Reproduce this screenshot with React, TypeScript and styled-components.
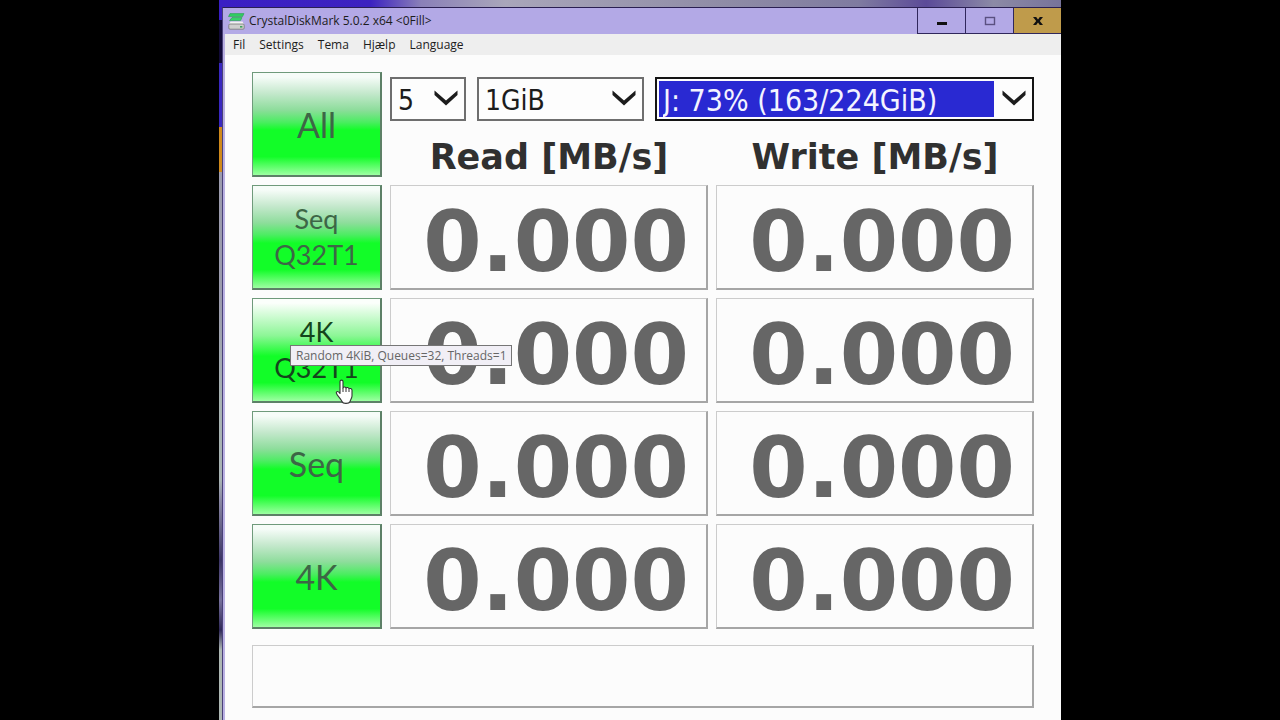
import React from "react";
import styled, { createGlobalStyle, css } from "styled-components";

const GlobalStyle = createGlobalStyle`
  *, *::before, *::after { box-sizing: border-box; }
  body { margin: 0; background: #000; }
  button, select { margin: 0; font: inherit; color: inherit; }
`;

const uiFont = `"Segoe UI", "Open Sans", "Noto Sans", sans-serif`;
const valueFont = `Verdana, "DejaVu Sans", sans-serif`;
const comboFont = `Tahoma, "DejaVu Sans Condensed", "DejaVu Sans", sans-serif`;
const buttonFont = `"Comic Sans MS", Lato, sans-serif`;

const Desktop = styled.div`
  width: 100%;
  max-width: 842px;
  min-height: 100vh;
  margin: 0 auto;
  padding: 7px 0 0 3px;
  display: flex;
  background:
    linear-gradient(90deg, #3a1fc4 0%, #3c22c0 18%, #8a80b8 24%, #a9a6ba 34%, #8f8ca6 60%, #7f7ba0 76%, #5b4a98 84%, #8c8aa6 92%, #77739a 100%)
      0 0 / 100% 7px no-repeat,
    linear-gradient(180deg, #3a1fc4 0 20px, #120a38 20px 63px, #3a28c0 63px 127px, #d08a1c 127px 172px, #9c9cae 172px 300px, #a9b4b4 400px 480px, #8a88a4 500px, #3c3566 560px, #77719c 600px, #2f2858 630px, #aeb8b4 650px 100%);
`;

const Window = styled.main`
  flex: 1;
  min-width: 0;
  display: flex;
  flex-direction: column;
  border-top: 1px solid #2a1f52;
  border-left: 1px solid #4a4178;
  background: #fcfcfc;
  font-family: ${uiFont};
  color: #1c1c1c;
`;

const TitleBar = styled.header`
  display: flex;
  align-items: stretch;
  height: 26px;
  padding-left: 5px;
  background: #b3a9e6;
  font-size: 12px;
`;

const Title = styled.h1`
  flex: 1;
  margin: 0;
  display: flex;
  align-items: center;
  gap: 4px;
  font-size: 12px;
  line-height: 26px;
  font-weight: 400;
  white-space: nowrap;
`;

const CaptionButton = styled.button<{ $close?: boolean }>`
  width: 48px;
  padding: 0;
  display: flex;
  align-items: center;
  justify-content: center;
  border: 0 solid #30275c;
  border-left-width: 1px;
  border-bottom-width: 1px;
  background: ${(p) => (p.$close ? "#bf9b4b" : "#b3a9e6")};
`;

const Client = styled.div`
  flex: 1;
  border-left: 2px solid #b9b0e2;
`;

const MenuBar = styled.nav`
  display: flex;
  align-items: center;
  gap: 14px;
  height: 21px;
  padding-left: 8px;
  background: #eeeeee;
  font-size: 12px;
`;

const MenuItem = styled.button`
  padding: 0;
  border: 0;
  background: none;
  line-height: 20px;
`;

const Body = styled.div`
  padding: 9px 19px 13px;
`;

const Board = styled.table`
  width: 100%;
  table-layout: fixed;
  border-collapse: separate;
  border-spacing: 8px;

  th, td { padding: 0; }
`;

const TestColumn = styled.col`
  width: 130px;
`;

const TestHead = styled.th`
  position: relative;
  height: 105px;
  font-weight: 400;
`;

const TestButton = styled.button<{ $large?: boolean; $hot?: boolean }>`
  display: block;
  width: 100%;
  height: 105px;
  padding: 0;
  border: 1px solid #6f9a7b;
  border-right: 2px solid #5d8067;
  border-bottom: 2px solid #5d8067;
  font-family: ${buttonFont};
  white-space: pre-line;
  ${(p) =>
    p.$large
      ? css`
          padding-top: 2px;
          font-size: 34px;
          line-height: 36px;
        `
      : css`
          font-size: 27px;
          line-height: 36px;
        `}
  ${(p) =>
    p.$hot
      ? css`
          color: #14451c;
          background: linear-gradient(#fbfffb 4%, #8cf696 36%, #12fd28 56%, #12fd28 82%, #9dffa2 100%);
        `
      : css`
          color: #3d6646;
          background: linear-gradient(#f6fcf8 4%, #c4e8cc 20%, #8edd9c 36%, #4ced62 48%, #12fd28 56%, #12fd28 82%, #9dffa2 100%);
        `}
`;

const ComboCell = styled.td`
  height: 49px;
  vertical-align: bottom;
`;

const ComboRow = styled.div`
  display: flex;
  gap: 11px;
`;

const Combo = styled.div<{ $width?: number }>`
  position: relative;
  ${(p) => (p.$width ? `flex: 0 0 ${p.$width}px;` : "flex: 1; min-width: 0;")}
`;

const ComboSelect = styled.select<{ $active?: boolean }>`
  display: block;
  appearance: none;
  width: 100%;
  height: 44px;
  padding: 2px 0 0 6px;
  border: 2px solid ${(p) => (p.$active ? "#141414" : "#6e6e6e")};
  border-radius: 0;
  outline: 0;
  font-family: ${comboFont};
  font-size: ${(p) => (p.$active ? 30 : 28)}px;
  color: ${(p) => (p.$active ? "#f4f4ff" : "#1c1c1c")};
  background: ${(p) =>
    p.$active
      ? "linear-gradient(#2929d2, #2929d2) 2px 2px / calc(100% - 40px) calc(100% - 4px) no-repeat #fdfdfd"
      : "#fdfdfd"};
`;

const Chevron = styled.svg`
  position: absolute;
  right: 8px;
  top: 13px;
  pointer-events: none;
`;

const ColumnHead = styled.th`
  height: 48px;
  vertical-align: bottom;
  font-family: ${valueFont};
  font-size: 35px;
  line-height: 40px;
  font-weight: 700;
  color: #303030;
  white-space: nowrap;
`;

const frame = css`
  border: 1px solid #cccccc;
  border-right: 2px solid #a6a6a6;
  border-bottom: 2px solid #a6a6a6;
`;

const Value = styled.td`
  height: 105px;
  ${frame}
  && { padding: 10px 17px 0 0; }
  text-align: right;
  font-family: ${valueFont};
  font-size: 84px;
  line-height: 92px;
  font-weight: 700;
  color: #666666;
`;

const Status = styled.div`
  height: 63px;
  margin: 8px 8px 0;
  ${frame}
`;

const Tooltip = styled.div`
  position: absolute;
  z-index: 1;
  left: 38px;
  top: 47px;
  padding: 0 4px 0 5px;
  border: 1px solid #767676;
  background: #f1eff6;
  font-size: 12px;
  line-height: 19px;
  color: #666666;
  white-space: nowrap;
`;

const Pointer = styled.svg`
  position: absolute;
  z-index: 2;
  left: 83px;
  top: 81px;
`;

const DiskLogo = () => (
  <svg width="17" height="17" viewBox="0 0 17 17" aria-hidden="true">
    <path d="M2 0.6h14l-1.5 3H0.5z" fill="#2fce62" stroke="#2a9c50" strokeWidth="0.6" />
    <path d="M4 4.6h10l-1.5 3H1.5z" fill="#35d468" stroke="#2a9c50" strokeWidth="0.6" />
    <path d="M2.5 8.5h12l1.5 3H1z" fill="#f2f2f2" />
    <rect x="0.8" y="11" width="15.4" height="5.2" rx="1.2" fill="#cfcfcf" stroke="#777" strokeWidth="0.8" />
    <rect x="12" y="13" width="2.4" height="1.6" fill="#3da45c" />
  </svg>
);

type ComboProps = { label: string; value: string; width?: number; active?: boolean };

const ComboBox = ({ label, value, width, active }: ComboProps) => (
  <Combo $width={width}>
    <ComboSelect aria-label={label} defaultValue={value} $active={active}>
      <option value={value}>{value}</option>
    </ComboSelect>
    <Chevron width="24" height="16" viewBox="0 0 24 16" aria-hidden="true">
      <path d="M0.5 0.5v4.5L12 15.5 23.5 5V0.5L12 10.6z" fill="#1c1c1c" />
    </Chevron>
  </Combo>
);

const tests = [
  { label: "Seq\nQ32T1", read: "0.000", write: "0.000" },
  { label: "4K\nQ32T1", read: "0.000", write: "0.000", hint: "Random 4KiB, Queues=32, Threads=1" },
  { label: "Seq", read: "0.000", write: "0.000" },
  { label: "4K", read: "0.000", write: "0.000" },
];

export default function App() {
  return (
    <>
      <GlobalStyle />
      <Desktop>
        <Window>
          <TitleBar>
            <Title>
              <DiskLogo />
              CrystalDiskMark 5.0.2 x64 &lt;0Fill&gt;
            </Title>
            <CaptionButton aria-label="Minimize">
              <svg width="12" height="12" viewBox="0 0 12 12">
                <path d="M1 7h10v3H1z" fill="#111" />
              </svg>
            </CaptionButton>
            <CaptionButton aria-label="Maximize">
              <svg width="12" height="12" viewBox="0 0 12 12">
                <rect x="1.5" y="2.5" width="9" height="7" fill="none" stroke="#5a5080" strokeWidth="1.4" />
              </svg>
            </CaptionButton>
            <CaptionButton aria-label="Close" $close>
              <svg width="12" height="12" viewBox="0 0 12 12">
                <path d="M1 2h3.2L6 4.5 7.800 2H11L7.800 6 11 10H7.800L6 7.500 4.200 10H1l3.200-4z" fill="#111" />
              </svg>
            </CaptionButton>
          </TitleBar>
          <Client>
            <MenuBar aria-label="Menu">
              {["Fil", "Settings", "Tema", "Hjælp", "Language"].map((item) => (
                <MenuItem key={item}>{item}</MenuItem>
              ))}
            </MenuBar>
            <Body>
              <Board>
                <colgroup>
                  <TestColumn />
                  <col />
                  <col />
                </colgroup>
                <thead>
                  <tr>
                    <TestHead rowSpan={2}>
                      <TestButton $large>All</TestButton>
                    </TestHead>
                    <ComboCell colSpan={2}>
                      <ComboRow>
                        <ComboBox label="Test count" value="5" width={76} />
                        <ComboBox label="Test size" value="1GiB" width={167} />
                        <ComboBox label="Drive" value="J: 73% (163/224GiB)" active />
                      </ComboRow>
                    </ComboCell>
                  </tr>
                  <tr>
                    <ColumnHead scope="col">Read [MB/s]</ColumnHead>
                    <ColumnHead scope="col">Write [MB/s]</ColumnHead>
                  </tr>
                </thead>
                <tbody>
                  {tests.map(({ label, read, write, hint }) => (
                    <tr key={label}>
                      <TestHead scope="row">
                        <TestButton $large={!label.includes("\n")} $hot={Boolean(hint)}>
                          {label}
                        </TestButton>
                        {hint && (
                          <>
                            <Tooltip role="tooltip">{hint}</Tooltip>
                            <Pointer width="19" height="26" viewBox="0 0 19 26" aria-hidden="true">
                              <path
                                d="M5 2.6C5 .6 8 .6 8 2.6V9c.3-1.5 3-1.4 3 .3.5-1.3 3-1 3 .8.6-1.1 3-.8 3 1.2V17c0 2-1.5 3.5-2 5.5-1 2.5-7 2.5-8 0C5.8 19.5 1.8 16.5 1.3 13.8 1.3 12 3.5 12 5 14.5z"
                                fill="#fff"
                                stroke="#333"
                                strokeWidth="1.1"
                                strokeLinejoin="round"
                              />
                              <path d="M8 9v4M11 9.5V13M14 10.5V13" stroke="#333" strokeWidth="1" />
                            </Pointer>
                          </>
                        )}
                      </TestHead>
                      <Value>{read}</Value>
                      <Value>{write}</Value>
                    </tr>
                  ))}
                </tbody>
              </Board>
              <Status role="status" />
            </Body>
          </Client>
        </Window>
      </Desktop>
    </>
  );
}
